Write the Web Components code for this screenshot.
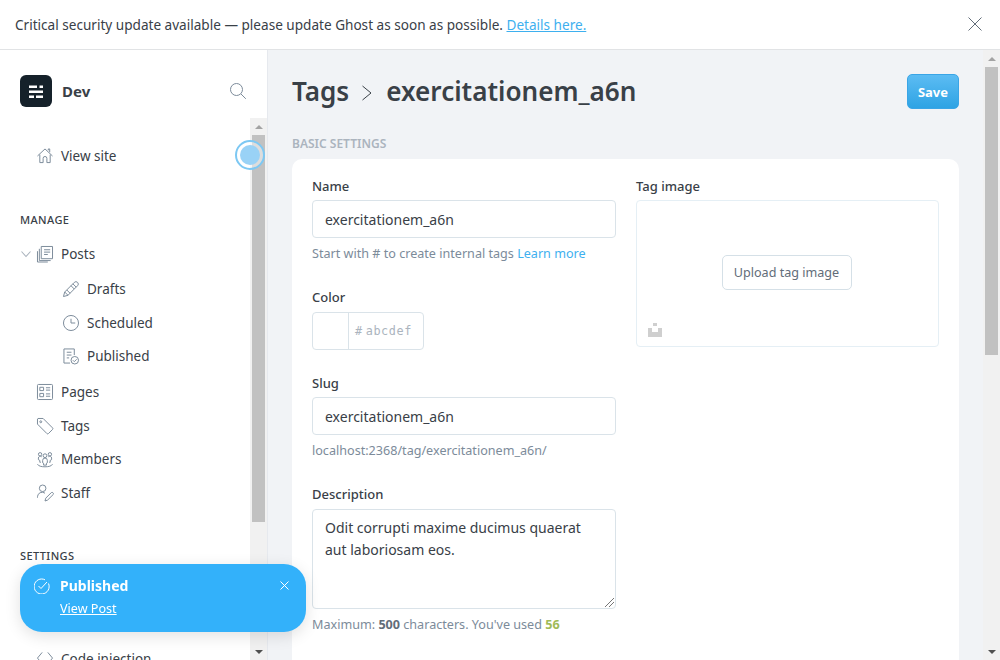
<!DOCTYPE html>
<html>
<head>
<meta charset="utf-8">
<title>Tags - Dev</title>
<style>
  html, body { margin: 0; height: 660px; overflow: hidden; }
  body { font-family: "Noto Sans", "Open Sans", sans-serif; font-size: 14px; color: #394047; background: #fff; }
</style>
</head>
<body>
<gh-app>
  <gh-alert slot="alert">Critical security update available — please update Ghost as soon as possible. <a href="#">Details here.</a></gh-alert>
  <gh-sidebar slot="sidebar"></gh-sidebar>
  <gh-tag-page slot="main"></gh-tag-page>
</gh-app>
<gh-toast></gh-toast>

<script>
const icons = {
    home: '<path d="M1 9 9 1.500l8 7.500M3.500 7.500v8.500h3.500v-4.500a2 2 0 0 1 4 0v4.500h3.500V7.500M12.500 3V1.500h1.500V5"/>',
    posts: '<path d="M5 1h12v13H5zM8 4.500h6.500M8 7h6.500M8 9.500h4M3 3.500V16h12M1 6v11.500h11"/>',
    drafts: '<path d="M1 17l1.300-4.800L12.500 2a2.100 2.100 0 0 1 3.500 3.500L5.800 15.700zM2.300 12.200l3.500 3.500M11 3.500 14.500 7M4.500 10l3.500 3.500M9 5.500 12.500 9"/>',
    clock: '<circle cx="9" cy="9" r="8"/><path d="M9 4.500V9h4.500"/>',
    published: '<path d="M8 16.500H1.500v-15h11v6.500M4.500 5h5M4.500 8h5M4.500 11h2.500"/><circle cx="13" cy="13.500" r="4"/><path d="M11 13.500l1.500 1.500 2.500-2.500"/>',
    pages: '<rect x="1" y="1" width="16" height="16" rx="1"/><path d="M3.500 4h4v3.500h-4zM3.500 10.500h4V14h-4zM10 4.500h4.500M10 7h4.500M10 11h4.500M10 13.500h4.500"/>',
    tags: '<path d="M1.500 1h5.500l10 10a1.200 1.200 0 0 1 0 1.700L12.700 17a1.200 1.200 0 0 1-1.700 0L1 7V1.500z"/><circle cx="4.500" cy="4.500" r="1"/>',
    members: '<circle cx="9" cy="5.500" r="2"/><path d="M6.500 13v-2.500a2.500 2.500 0 0 1 5 0V13l-1 .5v2h-3v-2z"/><circle cx="3.800" cy="4" r="1.800"/><circle cx="14.200" cy="4" r="1.800"/><path d="M4.500 12.500h-1v-2l-1.500-.8V8a2 2 0 0 1 3.500-1.300M13.500 12.500h1v-2l1.500-.8V8a2 2 0 0 0-3.500-1.300M1 14.500c1 2 4 2.800 8 2.800s7-.8 8-2.800"/>',
    staff: '<circle cx="6.500" cy="4" r="3.500"/><path d="M1 14v-1a5 5 0 0 1 8-3.800M9 17.500l.8-3 6-6a1.500 1.500 0 0 1 2 2l-6 6z"/>',
    code: '<path d="M6 2 1 8l5 6M12 2l5 6-5 6"/>'
};

const appTemplate = document.createElement('template');
appTemplate.innerHTML = `
    <style>
        :host { display: flex; flex-direction: column; height: 660px; }
        .body { display: flex; flex: 1; min-height: 0; }
    </style>
    <slot name="alert"></slot>
    <div class="body">
        <slot name="sidebar"></slot>
        <slot name="main"></slot>
    </div>
`;

class GhApp extends HTMLElement {
    constructor() {
        super();
        this.attachShadow({mode: 'open'}).appendChild(appTemplate.content.cloneNode(true));
    }
}

const alertTemplate = document.createElement('template');
alertTemplate.innerHTML = `
    <style>
        :host {
            display: flex;
            align-items: center;
            justify-content: space-between;
            box-sizing: border-box;
            height: 50px;
            padding: 0 18px 1px 15px;
            border-bottom: 1px solid #e1e3e5;
            font-size: 13.580px;
            color: #394047;
            background: #fff;
        }
        ::slotted(a) { color: #3eb0ef; text-decoration: underline; }
        svg { width: 14px; height: 14px; stroke: #626d79; stroke-width: 1; fill: none; display: block; }
    </style>
    <div><slot></slot></div>
    <svg viewBox="0 0 14 14"><path d="M.5.500l13 13M13.500.500l-13 13"/></svg>
`;

class GhAlert extends HTMLElement {
    constructor() {
        super();
        this.attachShadow({mode: 'open'}).appendChild(alertTemplate.content.cloneNode(true));
    }
}

const scrollbarTemplate = document.createElement('template');
scrollbarTemplate.innerHTML = `
    <style>
        :host {
            display: flex;
            flex-direction: column;
            flex: none;
            width: 17px;
            background: #f1f1f1;
        }
        .arrow { height: 17px; flex: none; display: flex; align-items: center; justify-content: center; }
        .arrow i { width: 0; height: 0; border-left: 4px solid transparent; border-right: 4px solid transparent; }
        .up i { border-bottom: 4px solid #a3a3a3; }
        .down i { border-top: 4px solid #505050; }
        .track { flex: 1; min-height: 0; padding: 0 2px; }
        .thumb { background: #c1c1c1; height: var(--thumb, 300px); }
    </style>
    <div class="arrow up"><i></i></div>
    <div class="track"><div class="thumb"></div></div>
    <div class="arrow down"><i></i></div>
`;

class GhScrollbar extends HTMLElement {
    constructor() {
        super();
        this.attachShadow({mode: 'open'}).appendChild(scrollbarTemplate.content.cloneNode(true));
        this.style.setProperty('--thumb', (this.getAttribute('thumb') || 300) + 'px');
    }
}

const navItemTemplate = document.createElement('template');
navItemTemplate.innerHTML = `
    <style>
        :host {
            display: flex;
            align-items: center;
            height: 33.5px;
            padding-left: 37px;
            color: #394047;
            font-size: 13.500px;
        }
        :host([sub]) { padding-left: 63px; }
        svg { width: 16px; height: 16px; flex: none; margin-right: 8px; stroke: #7c8b9a; stroke-width: 1.050; fill: none; overflow: visible; }
        .caret { display: none; position: absolute; left: 21px; width: 10px; height: 6px; stroke: #abb4be; margin: 0; }
        :host([open]) .caret { display: block; }
    </style>
    <svg class="caret" viewBox="0 0 10 6"><path d="M.5.500 5 5.500 9.500.500"/></svg>
    <svg id="icon" viewBox="0.500 0.500 17 17"></svg>
    <span><slot></slot></span>
`;

class GhNavItem extends HTMLElement {
    constructor() {
        super();
        const shadow = this.attachShadow({mode: 'open'});
        shadow.appendChild(navItemTemplate.content.cloneNode(true));
        shadow.getElementById('icon').innerHTML = icons[this.getAttribute('icon')];
    }
}

const sidebarTemplate = document.createElement('template');
sidebarTemplate.innerHTML = `
    <style>
        :host {
            display: flex;
            flex-direction: column;
            flex: none;
            box-sizing: border-box;
            width: 268px;
            height: 610px;
            border-right: 1px solid #e6e9ee;
            background: #fff;
        }
        header {
            display: flex;
            align-items: center;
            flex: none;
            box-sizing: border-box;
            height: 68px;
            padding: 25px 21px 11px 20px;
        }
        .logo {
            display: flex;
            align-items: center;
            justify-content: center;
            width: 32px;
            height: 32px;
            border-radius: 6px;
            background: #15212a;
        }
        .logo svg { width: 16px; height: 15px; fill: #fff; display: block; }
        .blog { flex: 1; margin-left: 10px; font-size: 15px; font-weight: 700; color: #394047; }
        .search { width: 16px; height: 16px; stroke: #7c8b9a; stroke-width: 1; fill: none; display: block; }
        .wrap { display: flex; flex: 1; min-height: 0; position: relative; }
        nav { flex: 1; min-width: 0; overflow: hidden; padding-top: 21px; }
        h4 {
            margin: 0;
            padding-left: 20px;
            font-size: 11px;
            line-height: 16px;
            font-weight: 500;
            letter-spacing: .4px;
            color: #394047;
        }
        .manage { margin-top: 39px; margin-bottom: 10px; }
        .settings { margin-top: 38px; margin-bottom: 79px; }
        .subs { margin-top: 1.250px; margin-bottom: 2.750px; }
        .pulse {
            position: absolute;
            left: 235px;
            top: 22px;
            box-sizing: border-box;
            width: 30px;
            height: 30px;
            border-radius: 50%;
            border: 2px solid #7dc8f3;
            background: rgba(255,255,255,.45);
            display: flex;
            align-items: center;
            justify-content: center;
        }
        .pulse i { width: 20px; height: 20px; border-radius: 50%; background: #99d2f6; }
    </style>
    <header>
        <div class="logo">
            <svg viewBox="0 0 16 15"><path d="M1 1.500h8v2.500H1zM11.500 1.500H15v2.500h-3.500zM1 6.500h14V9H1zM1 11.500h5V14H1zM8 11.500h7V14H8z"/></svg>
        </div>
        <div class="blog">Dev</div>
        <svg class="search" viewBox="0 0 16 16"><circle cx="6.500" cy="6.500" r="6"/><path d="M11 11l4.800 4.800"/></svg>
    </header>
    <div class="wrap">
        <nav>
            <gh-nav-item icon="home">View site</gh-nav-item>
            <h4 class="manage">MANAGE</h4>
            <gh-nav-item icon="posts" open>Posts</gh-nav-item>
            <div class="subs">
                <gh-nav-item icon="drafts" sub>Drafts</gh-nav-item>
                <gh-nav-item icon="clock" sub>Scheduled</gh-nav-item>
                <gh-nav-item icon="published" sub>Published</gh-nav-item>
            </div>
            <gh-nav-item icon="pages">Pages</gh-nav-item>
            <gh-nav-item icon="tags">Tags</gh-nav-item>
            <gh-nav-item icon="members">Members</gh-nav-item>
            <gh-nav-item icon="staff">Staff</gh-nav-item>
            <h4 class="settings">SETTINGS</h4>
            <gh-nav-item icon="code">Code injection</gh-nav-item>
        </nav>
        <gh-scrollbar thumb="387"></gh-scrollbar>
        <div class="pulse"><i></i></div>
    </div>
`;

class GhSidebar extends HTMLElement {
    constructor() {
        super();
        this.attachShadow({mode: 'open'}).appendChild(sidebarTemplate.content.cloneNode(true));
    }
}

const fieldTemplate = document.createElement('template');
fieldTemplate.innerHTML = `
    <style>
        :host { display: block; }
        label { display: block; font-size: 13px; line-height: 18px; font-weight: 500; color: #394047; margin-bottom: 5px; }
        :host([multi]) label { margin-bottom: 6px; }
        .box {
            box-sizing: border-box;
            border: 1px solid #dae3e9;
            border-radius: 4px;
            background: #fff;
            height: 38px;
            padding: 0 12px;
            display: flex;
            align-items: center;
            font-size: 14px;
            color: #394047;
            position: relative;
        }
        :host([multi]) .box { height: 100px; padding-top: 7px; align-items: flex-start; line-height: 22px; }
        .grip { position: absolute; right: 1px; bottom: 1px; width: 9px; height: 9px; stroke: #777; stroke-width: 1; display: none; }
        :host([multi]) .grip { display: block; }
        .hint { margin-top: 7px; font-size: 12.600px; line-height: 17px; color: #7c8b9a; }
    </style>
    <label id="label"></label>
    <div class="box"><span id="value"></span>
        <svg class="grip" viewBox="0 0 9 9"><path d="M9 0 0 9M9 4 4 9"/></svg>
    </div>
    <div class="hint"><slot></slot></div>
`;

class GhField extends HTMLElement {
    constructor() {
        super();
        const shadow = this.attachShadow({mode: 'open'});
        shadow.appendChild(fieldTemplate.content.cloneNode(true));
        shadow.getElementById('label').textContent = this.getAttribute('label');
        shadow.getElementById('value').textContent = this.getAttribute('value');
    }
}

const colorTemplate = document.createElement('template');
colorTemplate.innerHTML = `
    <style>
        :host { display: block; }
        label { display: block; font-size: 13px; line-height: 18px; font-weight: 500; color: #394047; margin-bottom: 6px; }
        .box {
            display: flex;
            box-sizing: border-box;
            width: 112px;
            height: 38px;
            border: 1px solid #dae3e9;
            border-radius: 4px;
        }
        .swatch { width: 35px; border-right: 1px solid #dae3e9; }
        .value { display: flex; align-items: center; gap: 3px; padding-left: 6px; color: #abb4be; font-size: 11.800px; letter-spacing: .6px; font-family: "DejaVu Sans Mono", monospace; }
    </style>
    <label>Color</label>
    <div class="box">
        <div class="swatch"></div>
        <div class="value"><span>#</span><span>abcdef</span></div>
    </div>
`;

class GhColorField extends HTMLElement {
    constructor() {
        super();
        this.attachShadow({mode: 'open'}).appendChild(colorTemplate.content.cloneNode(true));
    }
}

const imageTemplate = document.createElement('template');
imageTemplate.innerHTML = `
    <style>
        :host { display: block; }
        label { display: block; font-size: 13px; line-height: 18px; font-weight: 500; color: #394047; margin-bottom: 5px; }
        .box {
            position: relative;
            display: flex;
            align-items: center;
            justify-content: center;
            box-sizing: border-box;
            height: 147px;
            border: 1px solid #e5eff5;
            border-radius: 4px;
        }
        button {
            box-sizing: border-box;
            width: 130px;
            height: 35px;
            margin: 0 2px 3px 0;
            padding: 0;
            border: 1px solid #d5e0e7;
            border-radius: 5px;
            background: #fff;
            font: inherit;
            font-size: 12.600px;
            color: #626d79;
        }
        svg { position: absolute; left: 11px; bottom: 9px; width: 14px; height: 14px; fill: #cfcfcf; }
    </style>
    <label>Tag image</label>
    <div class="box">
        <button>Upload tag image</button>
        <svg viewBox="0 0 14 14"><path d="M5 0h4v3H5zM0 5h4v4h6V5h4v9H0z"/></svg>
    </div>
`;

class GhImageField extends HTMLElement {
    constructor() {
        super();
        this.attachShadow({mode: 'open'}).appendChild(imageTemplate.content.cloneNode(true));
    }
}

const pageTemplate = document.createElement('template');
pageTemplate.innerHTML = `
    <style>
        :host { display: flex; flex: 1; min-width: 0; height: 610px; background: #f1f3f6; }
        main { flex: 1; min-width: 0; overflow: hidden; padding: 24px 24px 0 24px; }
        .head { display: flex; align-items: center; justify-content: space-between; height: 35px; }
        h2 {
            display: flex;
            align-items: center;
            margin: 0;
            font-size: 26.100px;
            line-height: 35px;
            font-weight: 600;
            color: #394047;
        }
        h2 svg { width: 12px; height: 18px; margin: 2px 13px 0 12px; stroke: #394047; stroke-width: 1; fill: none; }
        .save {
            box-sizing: border-box;
            width: 52px;
            height: 35px;
            padding: 0;
            border: 1px solid #3aa5e6;
            border-radius: 5px;
            background: linear-gradient(#5cbcf3, #2ea3e4);
            color: #fff;
            font: inherit;
            font-size: 13px;
            font-weight: 700;
        }
        h3 { margin: 27px 0 7px; font-size: 12px; line-height: 16px; font-weight: 600; color: #abb4be; }
        .card {
            display: grid;
            grid-template-columns: 304px 303px;
            column-gap: 20px;
            align-items: start;
            padding: 18px 20px 40px;
            border-radius: 10px;
            background: #fff;
        }
        .col { display: flex; flex-direction: column; }
        gh-field:first-child { margin-bottom: 26px; }
        gh-color-field { margin-bottom: 24px; }
        .slug { margin-bottom: 26px; }
        a { color: #3eb0ef; text-decoration: none; }
        b.used { color: #9fbb58; }
        b { font-weight: 700; color: #626d79; }
    </style>
    <main>
        <div class="head">
            <h2>Tags<svg viewBox="0 0 12 18"><path d="M1.500 2 10 9l-8.500 7"/></svg>exercitationem_a6n</h2>
            <button class="save">Save</button>
        </div>
        <h3>BASIC SETTINGS</h3>
        <div class="card">
            <div class="col">
                <gh-field label="Name" value="exercitationem_a6n">Start with # to create internal tags <a href="#">Learn more</a></gh-field>
                <gh-color-field></gh-color-field>
                <gh-field class="slug" label="Slug" value="exercitationem_a6n">localhost:2368/tag/exercitationem_a6n/</gh-field>
                <gh-field multi label="Description" value="Odit corrupti maxime ducimus quaerat aut laboriosam eos.">Maximum: <b>500</b> characters. You've used <b class="used">56</b></gh-field>
            </div>
            <gh-image-field></gh-image-field>
        </div>
    </main>
    <gh-scrollbar thumb="288"></gh-scrollbar>
`;

class GhTagPage extends HTMLElement {
    constructor() {
        super();
        this.attachShadow({mode: 'open'}).appendChild(pageTemplate.content.cloneNode(true));
    }
}

const toastTemplate = document.createElement('template');
toastTemplate.innerHTML = `
    <style>
        :host {
            position: fixed;
            left: 20px;
            top: 564px;
            box-sizing: border-box;
            width: 286px;
            height: 68px;
            display: flex;
            padding: 11px 17px 0 14px;
            border-radius: 22px;
            background: #33b1fa;
            color: #fff;
            box-shadow: 0 4px 16px rgba(0,0,0,.12);
        }
        .check { width: 16px; height: 16px; margin: 3px 10px 0 0; flex: none; stroke: #fff; stroke-width: 1; fill: none; }
        .text { flex: 1; font-size: 13px; }
        strong { display: block; font-size: 14px; line-height: 22px; font-weight: 700; }
        a { display: block; margin-top: 1px; font-size: 12.600px; line-height: 22px; color: #fff; text-decoration: underline; }
        .close { width: 9px; height: 9px; margin: 6px 0 0 0; flex: none; stroke: #fff; stroke-width: 1; fill: none; }
    </style>
    <svg class="check" viewBox="0 0 16 16"><path d="M14.500 5.500A7.500 7.500 0 1 1 11 1.800"/><path d="M4.500 8l2.500 2.500 6-6.500"/></svg>
    <div class="text"><strong>Published</strong><a href="#">View Post</a></div>
    <svg class="close" viewBox="0 0 9 9"><path d="M.5.500l8 8M8.500.500l-8 8"/></svg>
`;

class GhToast extends HTMLElement {
    constructor() {
        super();
        this.attachShadow({mode: 'open'}).appendChild(toastTemplate.content.cloneNode(true));
    }
}

customElements.define('gh-app', GhApp);
customElements.define('gh-alert', GhAlert);
customElements.define('gh-scrollbar', GhScrollbar);
customElements.define('gh-nav-item', GhNavItem);
customElements.define('gh-sidebar', GhSidebar);
customElements.define('gh-field', GhField);
customElements.define('gh-color-field', GhColorField);
customElements.define('gh-image-field', GhImageField);
customElements.define('gh-tag-page', GhTagPage);
customElements.define('gh-toast', GhToast);
</script>
</body>
</html>
